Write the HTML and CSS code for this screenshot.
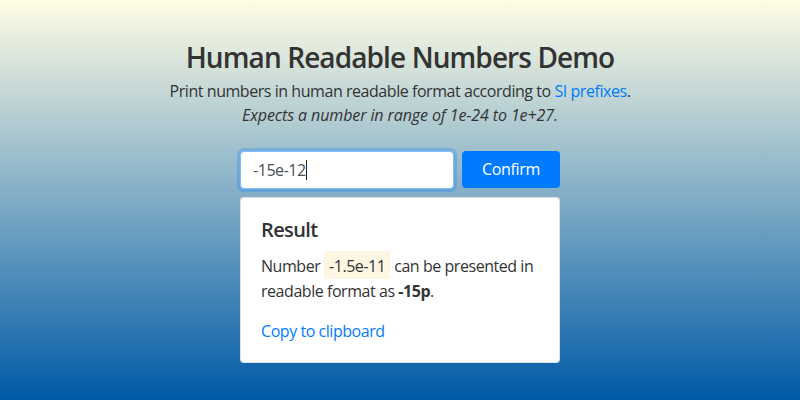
FILE: index.html
```html
<!DOCTYPE html>
<html lang="en">
<head>
<meta charset="utf-8">
<title>Human Readable Numbers Demo</title>
<link rel="stylesheet" href="styles.css">
</head>
<body>
<main class="page">
  <h3 class="title">Human Readable Numbers Demo</h3>
  <p class="lead">Print numbers in human readable format according to <a href="#" class="link">SI prefixes</a>.<br><em class="note">Expects a number in range of 1e-24 to 1e+27.</em></p>
  <div class="panel">
    <form class="form">
      <div class="input is-focused"><span class="input-text">-15e-12</span><span class="caret"></span></div>
      <button type="button" class="btn">Confirm</button>
    </form>
    <div class="card">
      <h5 class="card-title">Result</h5>
      <p class="card-text">Number <span class="num">-1.5e-11</span> can be presented in readable format as <strong>-15p</strong>.</p>
      <a href="#" class="link">Copy to clipboard</a>
    </div>
  </div>
</main>
</body>
</html>
```
FILE: styles.css
```css
html { height: 100%; }
body {
  margin: 0;
  min-height: 100%;
  background: linear-gradient(to bottom, #fffde4 0%, #005aa7 100%);
  font-family: "Open Sans", "Noto Sans", sans-serif;
  font-size: 16px;
  line-height: 24px;
  letter-spacing: -0.45px;
  color: #333;
}
.page {
  display: flex;
  flex-direction: column;
  align-items: center;
  padding-top: 41px;
  text-align: center;
}
.title {
  margin: 0 0 4px;
  font-size: 28px;
  font-weight: 600;
  line-height: 1.2;
  letter-spacing: -0.9px;
  color: #333;
}
.lead {
  margin: 0 0 24px;
}
.note { letter-spacing: -0.1px; }
.link { color: #007bff; text-decoration: none; }
.panel {
  width: 320px;
  text-align: left;
}
.form {
  display: flex;
  gap: 8px;
  margin: 0;
}
.input {
  flex: 1;
  box-sizing: border-box;
  height: 38px;
  padding: 6px 12px;
  background: #fff;
  border: 1px solid #80bdff;
  border-radius: 4px;
  box-shadow: 0 0 0 3px rgba(0, 123, 255, 0.25);
  color: #495057;
  display: flex;
  align-items: center;
}
.caret {
  display: inline-block;
  width: 1px;
  height: 20px;
  background: #222;
}
.btn {
  width: 98px;
  height: 37px;
  border: 0;
  border-radius: 4px;
  background: #007bff;
  color: #fff;
  font: inherit;
  letter-spacing: -0.3px;
  padding: 0;
}
.card {
  margin-top: 8px;
  background: #fff;
  border: 1px solid rgba(0, 0, 0, 0.125);
  border-radius: 4px;
  padding: 20px 20px 19px;
}
.card-title {
  margin: 0 0 12px;
  font-size: 20px;
  font-weight: 600;
  line-height: 1.2;
  letter-spacing: -0.6px;
}
.card-text { margin: 0 0 16px; }
.num {
  display: inline-block;
  background: #fdf6e3;
  padding: 3px 5px 0;
  line-height: 25px;
  margin-top: -4px;
}
strong { font-weight: 700; }
```
